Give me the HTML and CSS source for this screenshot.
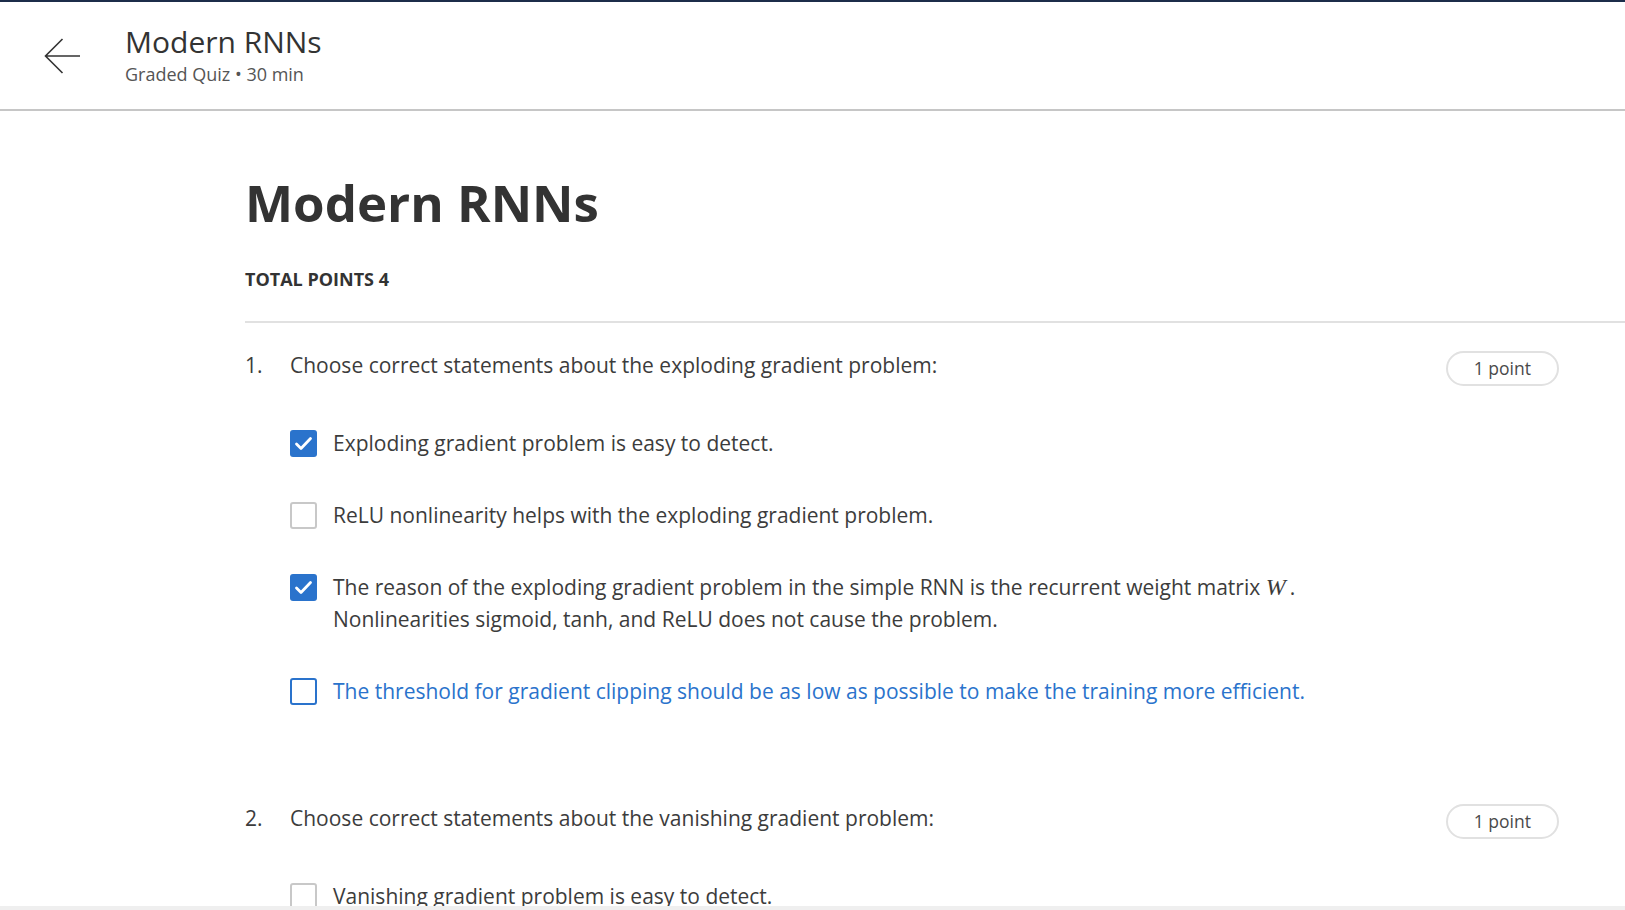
FILE: index.html
```html
<!DOCTYPE html>
<html lang="en">
<head>
<meta charset="utf-8">
<title>Modern RNNs</title>
<link rel="stylesheet" href="styles.css">
</head>
<body>
<header class="topbar">
  <a class="back" href="#" aria-label="Back">
    <svg width="37" height="36" viewBox="0 0 37 36"><path d="M36 18H1.5M18.5 1L1.5 18L18.5 35" fill="none" stroke="#333" stroke-width="1.6"/></svg>
  </a>
  <div class="titles">
    <div class="h-title">Modern RNNs</div>
    <div class="h-sub">Graded Quiz • 30 min</div>
  </div>
</header>
<main class="main">
  <h1 class="quiz-title">Modern RNNs</h1>
  <div class="total">TOTAL POINTS 4</div>
  <div class="divider"></div>

  <section class="question">
    <div class="qnum">1.</div>
    <div class="qbody">
      <div class="qtext">Choose correct statements about the exploding gradient problem:</div>
      <div class="options">
        <label class="option">
          <span class="box checked"><svg width="27" height="27" viewBox="0 0 27 27"><polyline points="6.5,14 11,18.5 20.5,8.5" fill="none" stroke="#fff" stroke-width="2.8" stroke-linecap="round" stroke-linejoin="round"/></svg></span>
          <span class="otext">Exploding gradient problem is easy to detect.</span>
        </label>
        <label class="option">
          <span class="box"></span>
          <span class="otext">ReLU nonlinearity helps with the exploding gradient problem.</span>
        </label>
        <label class="option">
          <span class="box checked"><svg width="27" height="27" viewBox="0 0 27 27"><polyline points="6.5,14 11,18.5 20.5,8.5" fill="none" stroke="#fff" stroke-width="2.8" stroke-linecap="round" stroke-linejoin="round"/></svg></span>
          <span class="otext">The reason of the exploding gradient problem in the simple RNN is the recurrent weight matrix <span class="math">W</span>. Nonlinearities sigmoid, tanh, and ReLU does not cause the problem.</span>
        </label>
        <label class="option active">
          <span class="box focus"></span>
          <span class="otext">The threshold for gradient clipping should be as low as possible to make the training more efficient.</span>
        </label>
      </div>
    </div>
    <div class="pill">1 point</div>
  </section>

  <section class="question q2">
    <div class="qnum">2.</div>
    <div class="qbody">
      <div class="qtext">Choose correct statements about the vanishing gradient problem:</div>
      <div class="options">
        <label class="option">
          <span class="box"></span>
          <span class="otext">Vanishing gradient problem is easy to detect.</span>
        </label>
      </div>
    </div>
    <div class="pill">1 point</div>
  </section>
</main>
<div class="bottom-strip"></div>
</body>
</html>
```
FILE: styles.css
```css
html, body {
  margin: 0;
  padding: 0;
  overflow: hidden;
  background: #fff;
}
body {
  font-family: "Open Sans", "Noto Sans", sans-serif;
  color: #3c3c3c;
}
.topbar {
  height: 107px;
  border-top: 2px solid #1c2d4a;
  border-bottom: 2px solid #c6c6c6;
  display: flex;
  align-items: flex-start;
  padding-left: 44px;
}
.back {
  display: block;
  margin-top: 36px;
  width: 37px;
  height: 36px;
}
.back svg { display: block; }
.titles {
  margin-left: 44px;
  padding-top: 22px;
}
.h-title {
  font-size: 30px;
  line-height: 36px;
  color: #333;
}
.h-sub {
  margin-top: 2px;
  font-size: 18px;
  line-height: 24px;
  color: #555;
}
.main {
  padding: 59px 0 0 245px;
}
.quiz-title {
  margin: 0;
  font-size: 51px;
  line-height: 64px;
  font-weight: 700;
  color: #333;
}
.total {
  margin-top: 33px;
  font-size: 18px;
  line-height: 24px;
  font-weight: 700;
  color: #333;
}
.divider {
  margin-top: 30px;
  border-top: 2px solid #e1e1e1;
}
.question {
  display: flex;
  align-items: flex-start;
  margin-top: 26px;
  padding-right: 66px;
}
.question.q2 {
  margin-top: 95px;
}
.qnum {
  width: 45px;
  flex: none;
  font-size: 21px;
  line-height: 32px;
}
.qbody {
  flex: 1;
  min-width: 0;
}
.qtext {
  font-size: 21px;
  line-height: 32px;
}
.options {
  margin-top: 46px;
  display: flex;
  flex-direction: column;
  gap: 40px;
}
.option {
  display: flex;
  align-items: flex-start;
}
.box {
  flex: none;
  box-sizing: border-box;
  width: 27px;
  height: 27px;
  margin-top: 3px;
  margin-right: 16px;
  border: 2px solid #c8c8c8;
  border-radius: 3px;
  background: #fff;
}
.box.checked {
  border: none;
  background: #2a73cc;
}
.box.checked svg { display: block; }
.box.focus {
  border-color: #2a73cc;
}
.otext {
  font-size: 21px;
  line-height: 32px;
}
.option.active .otext {
  color: #2a73cc;
}
.math {
  font-family: "Liberation Serif", "DejaVu Serif", serif;
  font-style: italic;
  font-size: 24px;
  line-height: 1;
  padding-right: 4px;
}
.pill {
  flex: none;
  margin-left: 40px;
  margin-top: 2px;
  padding: 0 26px;
  height: 31px;
  line-height: 31px;
  border: 2px solid #e1e1e1;
  border-radius: 18px;
  font-size: 17.5px;
  color: #4a4a4a;
  white-space: nowrap;
}
.bottom-strip {
  position: fixed;
  left: 0;
  right: 0;
  bottom: 0;
  height: 4px;
  background: #efefef;
}
```
